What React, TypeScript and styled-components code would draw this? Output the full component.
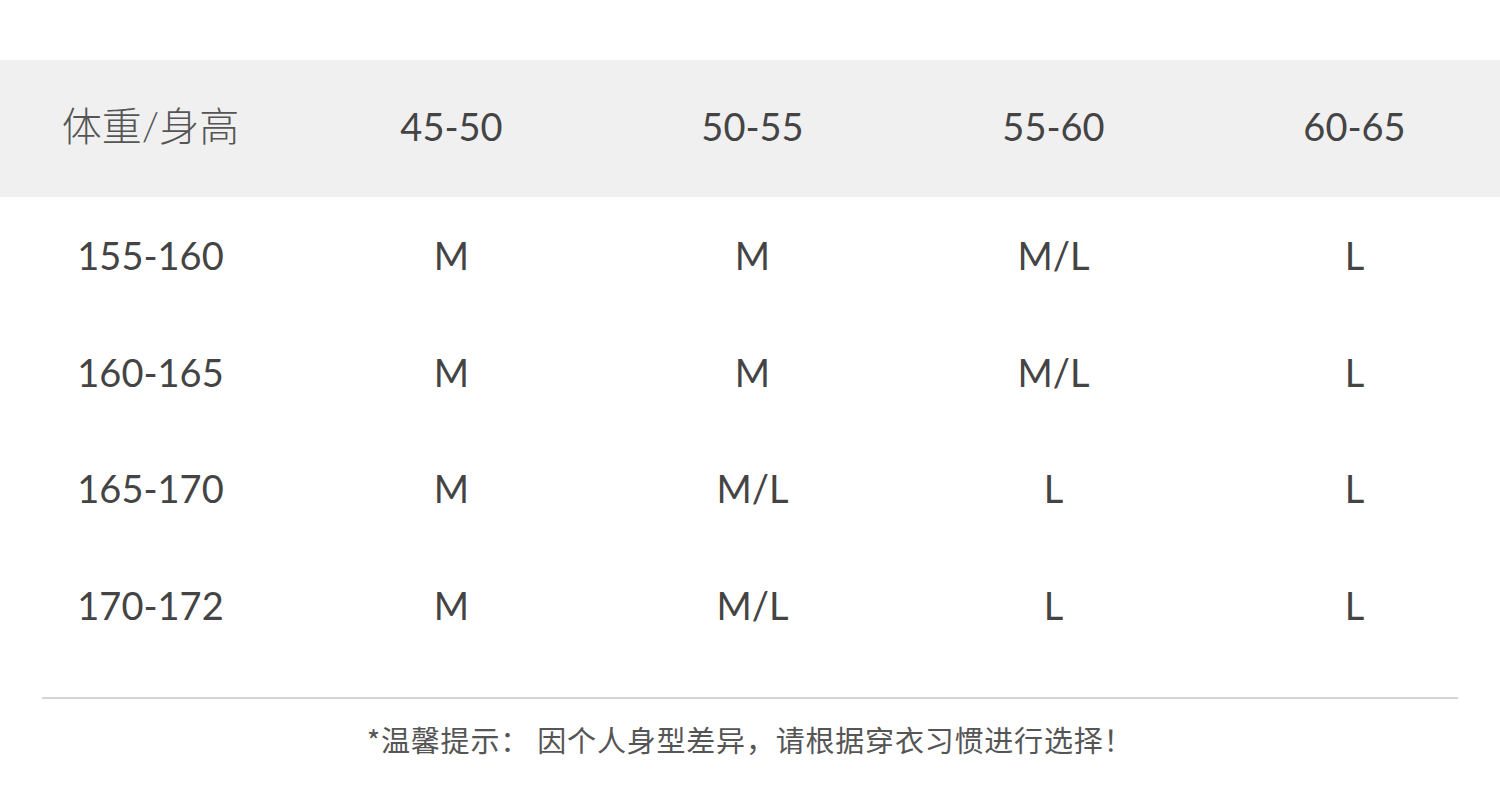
import React from 'react';
import styled, { createGlobalStyle } from 'styled-components';

const GlobalStyle = createGlobalStyle`
  html, body {
    margin: 0;
    padding: 0;
    background: #fff;
    overflow: hidden;
  }
  body {
    font-family: 'Lato', 'Noto Sans CJK SC', sans-serif;
  }
`;

const headers = ['体重/身高', '45-50', '50-55', '55-60', '60-65'];

const rows: string[][] = [
  ['155-160', 'M', 'M', 'M/L', 'L'],
  ['160-165', 'M', 'M', 'M/L', 'L'],
  ['165-170', 'M', 'M/L', 'L', 'L'],
  ['170-172', 'M', 'M/L', 'L', 'L'],
];

export default function App() {
  return (
    <Page>
      <GlobalStyle />
      <Table>
        <HeaderRow>
          {headers.map((h, i) => (
            <HeadCell key={h} cjk={i === 0}>
              {h}
            </HeadCell>
          ))}
        </HeaderRow>
        {rows.map((r) => (
          <Row key={r[0]}>
            {r.map((c, i) => (
              <Cell key={i}>{c}</Cell>
            ))}
          </Row>
        ))}
      </Table>
      <Divider />
      <Note>*温馨提示： 因个人身型差异，请根据穿衣习惯进行选择！</Note>
    </Page>
  );
}

const Page = styled.div`
  width: 1500px;
  height: 805px;
  padding-top: 60px;
  box-sizing: border-box;
`;

const Table = styled.div`
  display: flex;
  flex-direction: column;
`;

const HeaderRow = styled.div`
  display: grid;
  grid-template-columns: repeat(5, 301px);
  height: 137px;
  align-items: center;
  background: #f0f0f0;
  padding-bottom: 6px;
  box-sizing: border-box;
`;

const Row = styled.div`
  display: grid;
  grid-template-columns: repeat(5, 301px);
  height: 116.5px;
  align-items: center;
`;

const Cell = styled.div`
  text-align: center;
  font-family: 'Lato', 'Noto Sans CJK SC', sans-serif;
  font-size: 38px;
  color: #444;
  line-height: 1;
`;

const HeadCell = styled(Cell)<{ cjk?: boolean }>`
  font-size: ${(p) => (p.cjk ? '40px' : '38px')};
  color: ${(p) => (p.cjk ? '#555' : '#444')};
  font-weight: ${(p) => (p.cjk ? 300 : 400)};
`;

const Divider = styled.div`
  margin: 34px 42px 0;
  height: 2px;
  background: #d4d4d4;
`;

const Note = styled.div`
  margin-top: 23px;
  text-align: center;
  font-family: 'Noto Sans CJK SC', sans-serif;
  font-size: 29px;
  letter-spacing: 0.8px;
  color: #555;
  line-height: 1.2;
`;
